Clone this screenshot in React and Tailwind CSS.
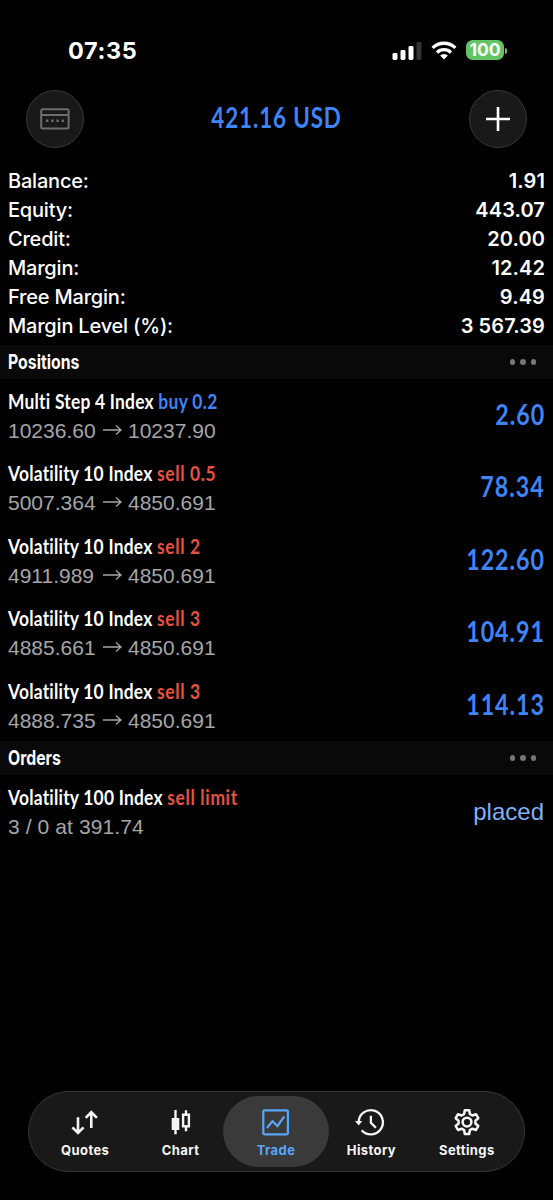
const summary = [
  { label: 'Balance:', value: '1.91' },
  { label: 'Equity:', value: '443.07' },
  { label: 'Credit:', value: '20.00' },
  { label: 'Margin:', value: '12.42' },
  { label: 'Free Margin:', value: '9.49' },
  { label: 'Margin Level (%):', value: '3 567.39' },
]

const positions = [
  { id: 1, symbol: 'Multi Step 4 Index', side: 'buy', volume: '0.2', open: '10236.60', current: '10237.90', profit: '2.60' },
  { id: 2, symbol: 'Volatility 10 Index', side: 'sell', volume: '0.5', open: '5007.364', current: '4850.691', profit: '78.34' },
  { id: 3, symbol: 'Volatility 10 Index', side: 'sell', volume: '2', open: '4911.989', current: '4850.691', profit: '122.60' },
  { id: 4, symbol: 'Volatility 10 Index', side: 'sell', volume: '3', open: '4885.661', current: '4850.691', profit: '104.91' },
  { id: 5, symbol: 'Volatility 10 Index', side: 'sell', volume: '3', open: '4888.735', current: '4850.691', profit: '114.13' },
]

function StatusBar() {
  return (
    <div className="flex h-[80px] items-center justify-between pt-[21px] pl-[68px] pr-[46px]">
      <span className="pt-px font-['Inter',sans-serif] text-[23.5px] font-bold leading-none tracking-[0.6px]">07:35</span>
      <div className="flex items-center">
        <svg width="30" height="18" viewBox="0 0 30 18" fill="white">
          <rect x="0.5" y="11" width="5" height="7" rx="1.4" />
          <rect x="8.5" y="8" width="5" height="10" rx="1.4" />
          <rect x="16.5" y="4" width="5" height="14" rx="1.4" />
          <rect x="24.5" y="0" width="5" height="18" rx="1.4" fill="#333335" />
        </svg>
        <svg className="ml-[9px]" width="26" height="19" viewBox="0 0 26 19" fill="none" stroke="white" strokeWidth="3.3">
          <path d="M1.6 6.9a16.3 16.3 0 0 1 22.8 0" />
          <path d="M6 11.5a10 10 0 0 1 14 0" />
          <path d="M13 18.6l-3.9-4a5.6 5.6 0 0 1 7.8 0z" fill="white" stroke="none" />
        </svg>
        <div className="ml-[9px] mb-px flex h-5 w-[38px] items-center justify-center rounded-[6.5px] bg-[#62c462] font-['Inter',sans-serif] text-[17.5px] font-bold leading-none">
          100
        </div>
        <div className="ml-px h-[6px] w-[2px] rounded-r-full bg-[#62c462]" />
      </div>
    </div>
  )
}

function Header() {
  return (
    <div className="flex h-[77px] items-center justify-between px-[26px]">
      <button className="flex size-[58px] items-center justify-center rounded-full border border-[#383838] bg-[#191919]">
        <svg width="30" height="22" viewBox="0 0 30 22" fill="none" stroke="#6d6d6d" strokeWidth="2">
          <rect x="1.2" y="1.2" width="27.4" height="19.4" rx="1.5" />
          <path d="M1 7h28" />
          <path d="M6 12.8h2.4M11.2 12.8h2.4M16.4 12.8h2.4M21.6 12.8h2.4" strokeWidth="2.4" />
        </svg>
      </button>
      <h1 className="-mx-4 scale-x-[0.8] whitespace-nowrap pb-[3px] font-['Lato',sans-serif] text-[28px] font-bold leading-none tracking-[1.1px] text-[#3f85f7]">
        421.16 USD
      </h1>
      <button className="flex size-[58px] items-center justify-center rounded-full border border-[#383838] bg-[#191919]">
        <svg width="24" height="24" viewBox="0 0 24 24" stroke="white" strokeWidth="2.6">
          <path d="M12 0v24M0 12h24" />
        </svg>
      </button>
    </div>
  )
}

function SectionHeader({ title }) {
  return (
    <div className="flex h-[34px] items-center justify-between bg-[#090909] pl-2 pr-[17px]">
      <h2 className="origin-left scale-x-[0.79] font-['Inter',sans-serif] text-[20px] font-bold leading-none">{title}</h2>
      <div className="flex gap-[5px]">
        <span className="size-[5.5px] rounded-full bg-[#767676]" />
        <span className="size-[5.5px] rounded-full bg-[#767676]" />
        <span className="size-[5.5px] rounded-full bg-[#767676]" />
      </div>
    </div>
  )
}

function TradeTitle({ symbol, side, text }) {
  return (
    <div className="h-[29px] origin-left scale-x-[0.87] whitespace-nowrap font-['Lato',sans-serif] text-[20px] font-bold leading-[28px] tracking-[0.26px]">
      {symbol}{' '}
      <span className={side === 'buy' ? 'tracking-[0.4px] text-[#3f85f7]' : 'tracking-[0.75px] text-[#e6533f]'}>{text}</span>
    </div>
  )
}

function PositionRow({ position }) {
  return (
    <div className="flex h-[72.4px] justify-between pl-2 pr-[8px] pt-[8px]">
      <div>
        <TradeTitle symbol={position.symbol} side={position.side} text={`${position.side} ${position.volume}`} />
        <div className="flex h-[30px] items-center font-['Liberation_Sans',sans-serif] text-[21px] leading-[30px] text-[#a6a6a6]">
          <span className="w-[95px]">{position.open}</span>
          <svg width="19" height="12" viewBox="0 0 19 12" fill="none" stroke="#a6a6a6" strokeWidth="1.3">
            <path d="M0 5h18M13 0.5l5 4.5-5 4.5" />
          </svg>
          <span className="ml-[6px]">{position.current}</span>
        </div>
      </div>
      <span className="origin-right scale-x-[0.83] pt-[13px] font-['Lato',sans-serif] text-[28px] font-bold leading-none tracking-[1.2px] text-[#3f85f7]">
        {position.profit}
      </span>
    </div>
  )
}

function QuotesIcon() {
  return (
    <svg width="28" height="28" viewBox="0 0 28 28" fill="none" stroke="currentColor" strokeWidth="2.6">
      <path d="M7 8.3v15.4M1.4 18.4L7 24l5.6-5.6M20.3 19V3M14.7 8.8l5.6-5.6 5.6 5.6" />
    </svg>
  )
}

function ChartIcon() {
  return (
    <svg width="28" height="28" viewBox="0 0 28 28" fill="none" stroke="currentColor" strokeWidth="2.4">
      <path d="M8.5 1v24.3M19 1.3v4M19 18v4.3" />
      <rect x="4.7" y="9" width="7.6" height="12" fill="currentColor" stroke="none" />
      <rect x="16.1" y="5.7" width="5.8" height="11.6" />
    </svg>
  )
}

function TradeIcon() {
  return (
    <svg width="28" height="28" viewBox="0 0 28 28" fill="none" stroke="currentColor" strokeWidth="2.2">
      <rect x="1.3" y="1.3" width="24.6" height="24" rx="1" />
      <path d="M4.9 19l5.6-6.8 5 4.8 6.8-9.6" />
    </svg>
  )
}

function HistoryIcon() {
  return (
    <svg className="overflow-visible" width="28" height="28" viewBox="0.7 0 28 28" fill="none" stroke="currentColor" strokeWidth="2.3">
      <path d="M2.4 13A12.1 12.1 0 1 1 5.4 21.2" />
      <path d="M-1.2 12h7.2L2.4 16.4z" fill="currentColor" stroke="none" />
      <path d="M14.6 6.8v7l5 5" />
    </svg>
  )
}

function SettingsIcon() {
  return (
    <svg width="28" height="28" viewBox="0 0 28 28" fill="none" stroke="currentColor" strokeWidth="2.5" strokeLinejoin="round">
      <path d="M11.8 1.3h4.4l.7 3.8 2.5 1.4 3.6-1.3 2.3 4-2.9 2.5v2.8l2.9 2.5-2.3 4-3.6-1.3-2.5 1.4-.7 3.8h-4.4l-.7-3.8-2.5-1.4-3.6 1.3-2.3-4 2.9-2.5v-2.8l-2.9-2.5 2.3-4 3.6 1.3 2.5-1.4z" />
      <circle cx="14" cy="13.1" r="4.4" />
    </svg>
  )
}

const tabs = [
  { name: 'Quotes', icon: QuotesIcon },
  { name: 'Chart', icon: ChartIcon },
  { name: 'Trade', icon: TradeIcon, active: true },
  { name: 'History', icon: HistoryIcon },
  { name: 'Settings', icon: SettingsIcon },
]

function TabBar() {
  return (
    <nav className="mx-7 mb-7 flex h-[81px] items-center rounded-full border border-[#363636] bg-[#191919] pl-[8.5px] pr-[9.5px]">
      {tabs.map(({ name, icon: Icon, active }) => (
        <div key={name} className="flex w-0 flex-1 justify-center">
          <button
            className={
              active
                ? 'flex h-[71px] w-[106px] shrink-0 flex-col items-center rounded-full bg-[#3a3a3a] pt-[13px] text-[#58a6f8]'
                : 'flex h-[71px] w-[106px] shrink-0 flex-col items-center pt-[13px] text-[#f5f5f5]'
            }
          >
            <Icon />
            <span className="mt-[5px] font-['Inter',sans-serif] text-[13px] font-bold leading-4 tracking-[0.4px]">{name}</span>
          </button>
        </div>
      ))}
    </nav>
  )
}

export default function App() {
  return (
    <div className="flex h-[1200px] w-[553px] flex-col overflow-hidden bg-black text-white">
      <StatusBar />
      <Header />
      <div className="flex h-[188px] flex-col pl-2 pr-[8px] pt-[10px]">
        {summary.map((row) => (
          <div key={row.label} className="flex h-[29px] items-center justify-between font-['Inter',sans-serif] text-[20px] leading-[29px]">
            <span className="font-medium tracking-[-0.2px]">{row.label}</span>
            <span className="font-semibold tracking-[0.1px]">{row.value}</span>
          </div>
        ))}
      </div>

      <SectionHeader title="Positions" />
      {positions.map((p) => (
        <PositionRow key={p.id} position={p} />
      ))}

      <SectionHeader title="Orders" />
      <div className="flex h-[72px] justify-between pl-2 pr-[9px] pt-[8px]">
        <div>
          <TradeTitle symbol="Volatility 100 Index" side="sell" text="sell limit" />
          <div className="font-['Liberation_Sans',sans-serif] text-[21px] leading-[30px] tracking-[0.1px] text-[#a6a6a6]">3 / 0 at 391.74</div>
        </div>
        <span className="pt-[17px] font-['Liberation_Sans',sans-serif] text-[24px] leading-none text-[#7fb0f8]">placed</span>
      </div>

      <div className="flex-1" />
      <TabBar />
    </div>
  )
}
